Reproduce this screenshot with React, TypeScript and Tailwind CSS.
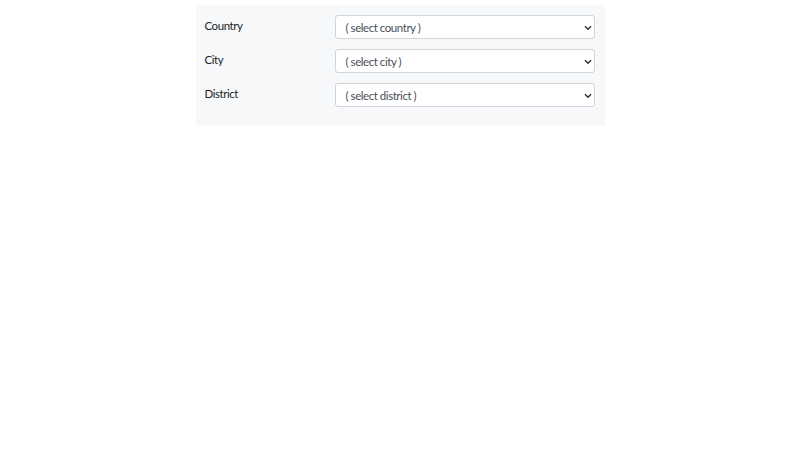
import React from 'react';

const fields = [
  { label: 'Country', placeholder: '( select country )' },
  { label: 'City', placeholder: '( select city )' },
  { label: 'District', placeholder: '( select district )' },
];

function Chevron() {
  return (
    <svg width="8" height="6" viewBox="0 0 8 6" className="pointer-events-none absolute right-[3px] top-[10px]">
      <path d="M1 1.2 L4 4.2 L7 1.2" fill="none" stroke="#333" strokeWidth="1.5" />
    </svg>
  );
}

export default function App() {
  return (
    <div className="min-h-[450px] w-full bg-white" style={{ fontFamily: 'Lato, "Noto Sans", sans-serif' }}>
      <div className="mx-auto mt-[5px] w-[409px] rounded-[3px] bg-[#f7f8fa] pl-[9px] pr-[10px] pt-[10px] pb-[19px]">
        <div className="flex flex-col gap-[10px]">
          {fields.map((f) => (
            <div key={f.label} className="flex">
              <div className="w-[130px] pt-[3px] text-[11.5px] leading-[16px] tracking-[-0.45px] text-[#212529]">{f.label}</div>
              <div className="relative flex-1">
                <div className="flex h-[24px] items-center rounded-[3px] border border-[#ced4da] bg-white pl-[10px] pt-[1px] text-[11.5px] tracking-[-0.45px] text-[#495057]">
                  {f.placeholder}
                </div>
                <Chevron />
              </div>
            </div>
          ))}
        </div>
      </div>
    </div>
  );
}
